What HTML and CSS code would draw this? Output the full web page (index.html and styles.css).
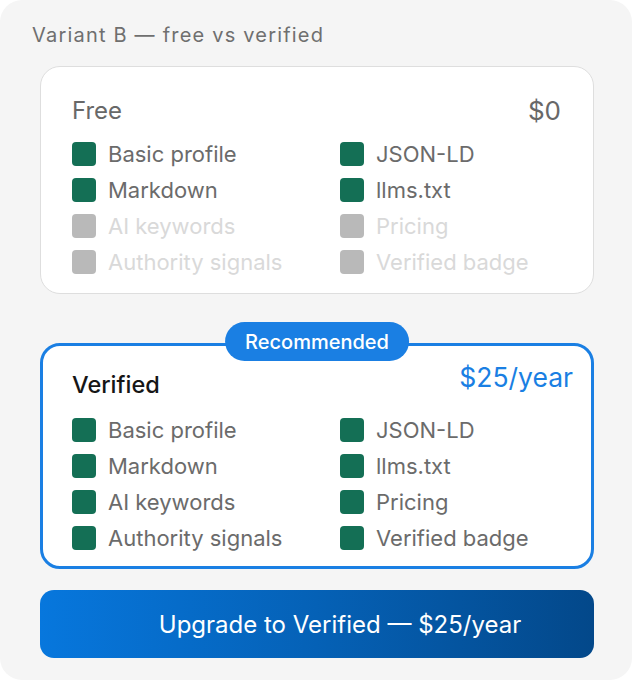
FILE: index.html
```html
<!DOCTYPE html>
<html lang="en">
<head>
<meta charset="utf-8">
<title>Plans</title>
<link rel="stylesheet" href="styles.css">
</head>
<body>
<section class="panel">
  <h2 class="panel-title">Variant B — free vs verified</h2>

  <div class="plan plan-free">
    <div class="plan-head">
      <span class="plan-name">Free</span>
      <span class="plan-price">$0</span>
    </div>
    <ul class="features">
      <li class="on"><span class="box"></span>Basic profile</li>
      <li class="on"><span class="box"></span>JSON-LD</li>
      <li class="on"><span class="box"></span>Markdown</li>
      <li class="on"><span class="box"></span>llms.txt</li>
      <li class="off"><span class="box"></span>AI keywords</li>
      <li class="off"><span class="box"></span>Pricing</li>
      <li class="off"><span class="box"></span>Authority signals</li>
      <li class="off"><span class="box"></span>Verified badge</li>
    </ul>
  </div>

  <div class="plan plan-verified">
    <span class="badge">Recommended</span>
    <div class="plan-head">
      <span class="plan-name">Verified</span>
      <span class="plan-price">$25/year</span>
    </div>
    <ul class="features">
      <li class="on"><span class="box"></span>Basic profile</li>
      <li class="on"><span class="box"></span>JSON-LD</li>
      <li class="on"><span class="box"></span>Markdown</li>
      <li class="on"><span class="box"></span>llms.txt</li>
      <li class="on"><span class="box"></span>AI keywords</li>
      <li class="on"><span class="box"></span>Pricing</li>
      <li class="on"><span class="box"></span>Authority signals</li>
      <li class="on"><span class="box"></span>Verified badge</li>
    </ul>
  </div>

  <button class="upgrade" type="button">Upgrade to Verified — $25/year</button>
</section>
</body>
</html>
```

FILE: styles.css
```css
* {
  box-sizing: border-box;
}

html,
body {
  margin: 0;
  background: #ffffff;
}

body {
  font-family: Inter, "Noto Sans", sans-serif;
  -webkit-font-smoothing: antialiased;
}

.panel {
  width: 632px;
  height: 680px;
  background: #f5f5f5;
  border-radius: 22px;
  padding: 22px 38px 22px 40px;
  display: flex;
  flex-direction: column;
}

.panel-title {
  margin: 0 0 18px -8px;
  font-size: 20px;
  line-height: 26px;
  font-weight: 400;
  letter-spacing: 1.2px;
  color: #6f6f6f;
}

.plan {
  position: relative;
  background: #ffffff;
  border-radius: 20px;
}

.plan-free {
  border: 1px solid #dedede;
  padding: 29px 32px 19px 31px;
}

.plan-verified {
  margin-top: 49px;
  border: 3px solid #1a7fe3;
  padding: 25px 18px 16px 29px;
}

.plan-head {
  display: flex;
  justify-content: space-between;
  align-items: center;
  height: 28px;
  margin-bottom: 18px;
}

.plan-free .plan-name {
  font-size: 24px;
  color: #686868;
}

.plan-free .plan-price {
  font-size: 26px;
  color: #686868;
}

.plan-verified .plan-head {
  align-items: flex-start;
  margin-bottom: 19px;
}

.plan-verified .plan-name {
  font-size: 23.5px;
  line-height: 28px;
  font-weight: 500;
  color: #161616;
}

.plan-verified .plan-price {
  font-size: 26.5px;
  line-height: 32px;
  margin-top: -10px;
  color: #1a7fe3;
}

.badge {
  position: absolute;
  top: -24px;
  left: 50%;
  transform: translateX(-50%);
  height: 39px;
  padding: 0 20px;
  display: flex;
  align-items: center;
  border-radius: 20px;
  background: #1a7fe3;
  color: #ffffff;
  font-size: 20px;
  font-weight: 500;
  white-space: nowrap;
}

.features {
  list-style: none;
  margin: 0;
  padding: 0;
  display: grid;
  grid-template-columns: 268px 1fr;
  row-gap: 12px;
}

.features li {
  display: flex;
  align-items: center;
  gap: 12px;
  height: 24px;
  font-size: 22px;
  white-space: nowrap;
}

.box {
  flex: none;
  width: 24px;
  height: 24px;
  border-radius: 4px;
}

.features .on {
  color: #6b6b6b;
}

.features .on .box {
  background: #146f55;
}

.features .off {
  color: #d9d9d9;
}

.features .off .box {
  background: #b9b9b9;
}

.upgrade {
  margin-top: 21px;
  height: 68px;
  border: 0;
  border-radius: 14px;
  background: linear-gradient(90deg, #0777dd 0%, #0561b6 50%, #03488a 100%);
  color: #ffffff;
  font-family: inherit;
  font-size: 24px;
  padding: 0 0 0 46px;
  cursor: pointer;
}
```
